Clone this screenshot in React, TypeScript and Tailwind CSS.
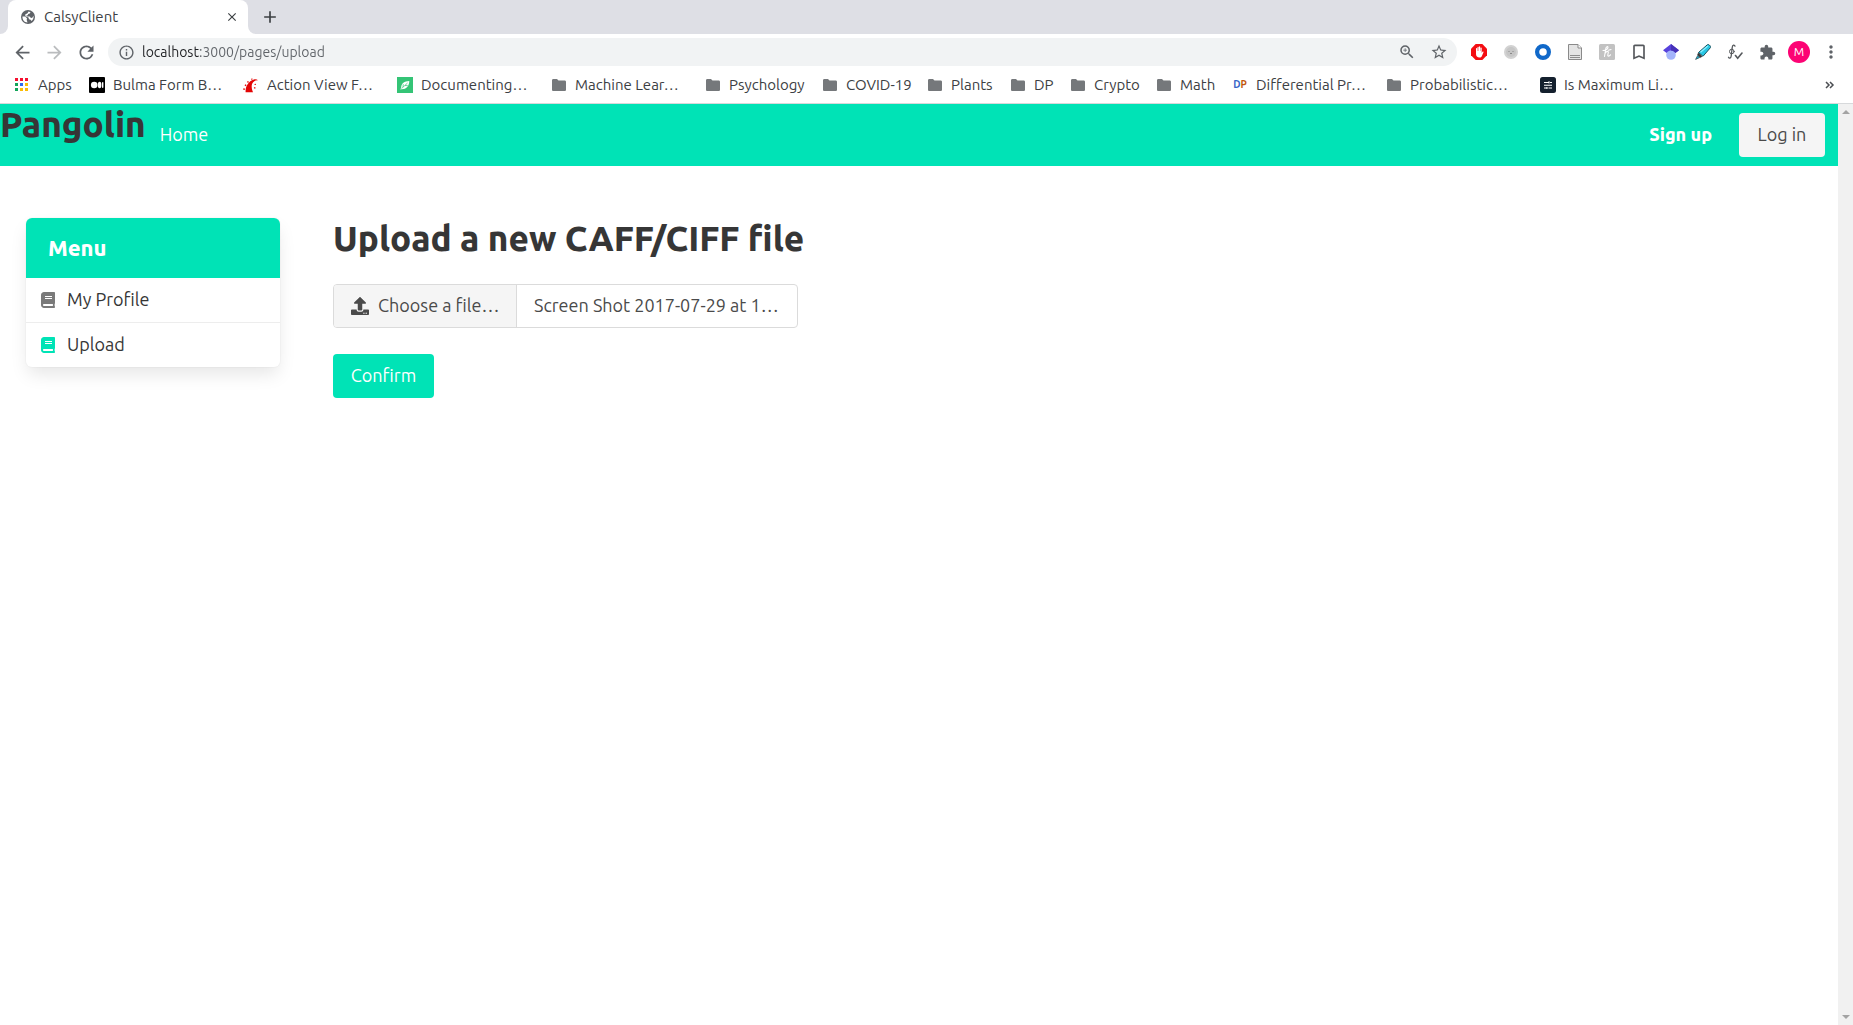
import type { ReactNode } from "react";
import { FaBook, FaUpload } from "react-icons/fa";
import {
  MdAdd,
  MdArrowBack,
  MdArrowForward,
  MdBookmarkBorder,
  MdClose,
  MdExtension,
  MdInfoOutline,
  MdMoreVert,
  MdRefresh,
  MdStarBorder,
  MdZoomIn,
} from "react-icons/md";

const GlobeIcon = () => (
  <svg width="14" height="14" viewBox="0 0 14 14">
    <circle cx="7" cy="7" r="7" fill="#5f6368" />
    <path d="M1.500 6.500L4 6.600l2 1.700-.3 1.700.8 2.400C3.500 12.500 1.200 9.800 1.500 6.500zM7.500 1.600l2 .6-.7 1.300-1.600.4-.4 1.300-1.400.4.6 1h2.600l1.400 1.300 1.300-.2 1.200-2c.4 2-.5 4-2 5.200L9.600 9.700 8 9.200 7.500 7.600 4.400 6.300 4.200 4.400 6.500 3.300z" fill="#fff" />
  </svg>
);

const AppsIcon = () => (
  <svg width="16" height="16" viewBox="0 0 16 16">
    <rect x="1" y="1" width="3" height="3" fill="#f5102f" />
    <rect x="6" y="1" width="3" height="3" fill="#f5102f" />
    <rect x="11" y="1" width="3" height="3" fill="#f5102f" />
    <rect x="1" y="6" width="3" height="3" fill="#12a55a" />
    <rect x="6" y="6" width="3" height="3" fill="#2d6bf0" />
    <rect x="11" y="6" width="3" height="3" fill="#fbbc05" />
    <rect x="1" y="11" width="3" height="3" fill="#12a55a" />
    <rect x="6" y="11" width="3" height="3" fill="#fbbc05" />
    <rect x="11" y="11" width="3" height="3" fill="#fbbc05" />
  </svg>
);

const MediumIcon = () => (
  <svg width="16" height="16" viewBox="0 0 16 16">
    <rect width="16" height="16" rx="1" fill="#000" />
    <circle cx="5.2" cy="8" r="3.3" fill="#fff" />
    <ellipse cx="10.6" cy="8" rx="1.8" ry="3.2" fill="#fff" />
    <rect x="13" y="5" width="1.400" height="6" rx="0.700" fill="#fff" />
  </svg>
);

const RailsIcon = () => (
  <svg width="16" height="16" viewBox="0 0 16 16" fill="#e30505">
    <path d="M2.600 15.200C2.300 9.600 5 4.200 11 2.400c1.700-.5 3 .1 4 .9-3.600-.2-6.200 2.200-6.300 5.400-.1 2.500.5 4.600 1.300 6.500z" />
    <path d="M.4 11.200l1.500.3-.2 1.500-1.500-.2zM2.200 7.300l1.300.7-.6 1.300-1.300-.7zM5 3.900l1 1-1.100 1-.9-1.100zM8.500 1.400l1.300.4-.6 1-1.300-.3zM11.500 7l1.400-.2.2 1-1.500.3zM10.900 10.200l1.500.1.100 1.200-1.500-.1z" />
  </svg>
);

const LeafIcon = () => (
  <svg width="16" height="16" viewBox="0 0 16 16">
    <rect width="16" height="16" fill="#34c476" />
    <path d="M12.300 4C7.500 4.300 4 6.400 4.200 10.800L3.200 12.500l1-.3c4.800.3 7.900-2.600 8.100-8.200z" fill="#fff" />
    <path d="M4.500 11.600l6-5.600M6 10l.3-2.800M8 8.500l2.800.1" stroke="#34c476" strokeWidth="0.700" />
  </svg>
);

const FolderIcon = () => (
  <svg width="14" height="12" viewBox="0 0 14 12">
    <path d="M1.300 0H5l1.500 1.500h6.200c.7 0 1.300.6 1.300 1.300v7.900c0 .7-.6 1.300-1.300 1.300H1.300C.6 12 0 11.400 0 10.700V1.300C0 .6.6 0 1.300 0z" fill="#75787b" />
  </svg>
);

const DpIcon = () => (
  <span className="text-[10px] leading-4 font-bold">
    <span className="text-[#3765c8]">D</span>
    <span className="text-[#c2560c]">P</span>
  </span>
);

const StackIcon = () => (
  <svg width="16" height="16" viewBox="0 0 16 16">
    <rect width="16" height="16" rx="2.500" fill="#14202e" />
    <path d="M4 5.500h4.500M10 5.500h2M4 8.200h8M4 11h3M8.500 11H12M9 4.300v2.200M7 9.900v2.200" stroke="#fff" strokeWidth="1.100" />
  </svg>
);

type Bookmark = { label: string; icon: ReactNode; width: string };

const bookmarks: Bookmark[] = [
  { label: "Apps", icon: <AppsIcon />, width: "w-[75px]" },
  { label: "Bulma Form B…", icon: <MediumIcon />, width: "w-[154px]" },
  { label: "Action View F…", icon: <RailsIcon />, width: "w-[154px]" },
  { label: "Documenting…", icon: <LeafIcon />, width: "w-[154px]" },
  { label: "Machine Lear…", icon: <FolderIcon />, width: "w-[154px]" },
  { label: "Psychology", icon: <FolderIcon />, width: "w-[117px]" },
  { label: "COVID-19", icon: <FolderIcon />, width: "w-[105px]" },
  { label: "Plants", icon: <FolderIcon />, width: "w-[83px]" },
  { label: "DP", icon: <FolderIcon />, width: "w-[60px]" },
  { label: "Crypto", icon: <FolderIcon />, width: "w-[86px]" },
  { label: "Math", icon: <FolderIcon />, width: "w-[76px]" },
  { label: "Differential Pr…", icon: <DpIcon />, width: "w-[154px]" },
  { label: "Probabilistic…", icon: <FolderIcon />, width: "w-[154px]" },
  { label: "Is Maximum Li…", icon: <StackIcon />, width: "w-[154px]" },
];

const AdblockIcon = () => (
  <svg width="16" height="16" viewBox="0 0 16 16">
    <path d="M4.700 0h6.600L16 4.700v6.600L11.300 16H4.700L0 11.300V4.700z" fill="#f40d12" />
    <path d="M5 8V4.500c0-.8 1.200-.8 1.200 0V7h.3V3.300c0-.8 1.200-.8 1.200 0V7H8V2.900c0-.8 1.200-.8 1.200 0V7h.3V4c0-.8 1.200-.8 1.200 0v5l.7-1.200c.4-.7 1.400-.3 1.100.5l-1.600 3.700C10.400 13 9.600 13.500 8.500 13.500 6.200 13.500 5 12 5 10z" fill="#fff" />
  </svg>
);

const FaceIcon = () => (
  <svg width="16" height="16" viewBox="0 0 16 16">
    <circle cx="8" cy="8" r="7" fill="#d2d2d2" />
    <circle cx="8" cy="8" r="5" fill="#c6c6c6" />
    <path d="M5.500 7.500h1M9.500 7.500h1M7 9.300q1 .7 2 0" stroke="#888" fill="none" />
  </svg>
);

const RingIcon = () => (
  <svg width="16" height="16" viewBox="0 0 16 16">
    <circle cx="8" cy="8" r="5.900" fill="none" stroke="#1068c9" strokeWidth="4.200" />
  </svg>
);

const PageIcon = () => (
  <svg width="16" height="16" viewBox="0 0 16 16">
    <path d="M1.500.5H11L14.500 4v11.500h-13z" fill="#e4e4e4" stroke="#8a8a8a" />
    <path d="M11 .5V4h3.500" fill="#fff" stroke="#8a8a8a" />
    <path d="M3 11.500h10M3 13.500h10" stroke="#8d8d8d" />
  </svg>
);

const HoneyIcon = () => (
  <svg width="16" height="16" viewBox="0 0 16 16">
    <rect width="16" height="16" rx="1.500" fill="#c2c2c2" />
    <path d="M4 6.500c3 0 5-1.500 5-3.200 0-1.300-1.700-.8-2.200 1.200L5.500 12.500M6 9.500c1.500-2.500 3.500-2.800 3.300-1L8.800 11c-.2 1.500 1.400 1.500 2.700-.2M9.500 6.300l2.500-.8" fill="none" stroke="#fff" strokeWidth="1.100" strokeLinecap="round" />
  </svg>
);

const ScholarIcon = () => (
  <svg width="16" height="16" viewBox="0 0 16 16">
    <circle cx="8" cy="11" r="4.800" fill="#a3b4fb" />
    <path d="M8 0l8 6.200-3.600 2.700C11.500 7.400 10 6.500 8 6.500S4.500 7.400 3.600 8.900L0 6.200z" fill="#5742dc" />
    <path d="M8 0l8 6.200-3.600 2.700C11.500 7.400 10 6.500 8 6.500z" fill="#4632b8" />
  </svg>
);

const HighlighterIcon = () => (
  <svg width="16" height="16" viewBox="0 0 16 16" strokeLinejoin="round">
    <path d="M3.500 8.500L12.300.8c.7-.5 1.300-.4 1.900.1l1 1c.5.600.6 1.200.1 1.900L8 12.300z" fill="#27c7e5" stroke="#174f5c" />
    <path d="M5.500 8.200l7.300-6.300" stroke="#8df0ff" strokeWidth="1.300" />
    <path d="M3.300 9l3.700 3.500-1.800 1-2.600-2.500z" fill="#333" stroke="#222" strokeWidth="0.500" />
    <path d="M2.700 11.500l2 2L.6 15.400z" fill="#1fb7d6" stroke="#2b4147" strokeWidth="0.700" />
  </svg>
);

const FormulaIcon = () => (
  <svg width="16" height="16" viewBox="0 0 16 16" fill="none" stroke="#55585c" strokeWidth="1.300" strokeLinecap="round">
    <path d="M8 2.200C7.500.5 5.600.7 5.300 3L4.200 12c-.3 2.300-2 2.700-2.700 1.300" />
    <circle cx="4.800" cy="7.500" r="2.300" strokeWidth="1" />
    <path d="M8.500 11.500l2.200 2.800 4.300-5.300" strokeWidth="1.600" />
  </svg>
);

const extensions: { name: string; icon: ReactNode }[] = [
  { name: "Ad blocker", icon: <AdblockIcon /> },
  { name: "Face", icon: <FaceIcon /> },
  { name: "Ring", icon: <RingIcon /> },
  { name: "Page", icon: <PageIcon /> },
  { name: "Coupons", icon: <HoneyIcon /> },
  { name: "Reading list", icon: <MdBookmarkBorder size={20} className="shrink-0 text-[#55585c]" /> },
  { name: "Scholar", icon: <ScholarIcon /> },
  { name: "Highlighter", icon: <HighlighterIcon /> },
  { name: "Formula", icon: <FormulaIcon /> },
  { name: "Extensions", icon: <MdExtension size={17} className="shrink-0 text-[#5f6368]" /> },
];

function TabStrip() {
  return (
    <div className="flex h-[34px] bg-[#dedfe5] text-[#3c4043]">
      <div className="flex w-2 bg-white">
        <span className="h-full w-2 rounded-br-lg bg-[#dedfe5]" />
      </div>
      <div className="flex w-60 items-center rounded-t-lg bg-white pr-2 pl-[13px]">
        <GlobeIcon />
        <span className="ml-[9px] flex-1 text-[15px]">CalsyClient</span>
        <button aria-label="Close tab" className="flex size-4 items-center justify-center">
          <MdClose size={14} />
        </button>
      </div>
      <div className="flex w-2 bg-white">
        <span className="h-full w-2 rounded-bl-lg bg-[#dedfe5]" />
      </div>
      <button aria-label="New tab" className="ml-1 flex w-5 items-center justify-center">
        <MdAdd size={20} />
      </button>
    </div>
  );
}

function Toolbar() {
  return (
    <div className="flex h-9 items-center bg-white px-3 text-[#5f6368]">
      <div className="flex w-24 gap-3">
        <button aria-label="Back" className="flex w-5 justify-center">
          <MdArrowBack size={21} className="shrink-0" />
        </button>
        <button aria-label="Forward" className="flex w-5 justify-center text-[#babcbe]">
          <MdArrowForward size={21} className="shrink-0" />
        </button>
        <button aria-label="Reload" className="flex w-5 justify-center">
          <MdRefresh size={21} className="shrink-0" />
        </button>
      </div>
      <div className="flex h-7 flex-1 items-center rounded-full bg-[#f1f3f4] px-2">
        <span className="flex w-5 justify-center">
          <MdInfoOutline size={17} />
        </span>
        <input
          aria-label="Address"
          defaultValue="localhost:3000/pages/upload"
          className="ml-1.5 h-7 min-w-0 flex-1 bg-linear-to-r from-[#202124] from-[58px] to-[#5f6368] to-[58px] bg-clip-text text-[14px] text-transparent caret-black outline-none"
        />
        <button aria-label="Zoom" className="flex w-5 justify-center">
          <MdZoomIn size={18} />
        </button>
        <button aria-label="Bookmark this page" className="ml-3 flex w-5 justify-center">
          <MdStarBorder size={18} />
        </button>
      </div>
      <div className="ml-[14px] flex items-center gap-4">
        {extensions.map((e) => (
          <button key={e.name} aria-label={e.name} className="flex size-4 items-center justify-center">
            {e.icon}
          </button>
        ))}
      </div>
      <button className="ml-[13px] size-[22px] rounded-full bg-[#fc0374] text-center text-[12px] leading-[22px] text-white">
        M
      </button>
      <button aria-label="Browser menu" className="ml-[11px] flex w-5 justify-center">
        <MdMoreVert size={20} />
      </button>
    </div>
  );
}

function BookmarkBar() {
  return (
    <nav
      aria-label="Bookmarks"
      className="flex h-[34px] items-center border-b border-[#d7d9db] bg-white pb-1 pl-[14px] text-[15px] leading-5 text-[#3c4043]"
    >
      {bookmarks.map((b) => (
        <a key={b.label} href="#" className={`flex shrink-0 items-center gap-2 whitespace-nowrap ${b.width}`}>
          <span className="flex size-4 shrink-0 items-center justify-center">{b.icon}</span>
          {b.label}
        </a>
      ))}
      <button aria-label="More bookmarks" className="mr-[18px] ml-auto flex">
        <svg width="10" height="8" viewBox="0 0 10 8" fill="none" stroke="#4b4e52" strokeWidth="1.500">
          <path d="M1 1l3 3-3 3M5 1l3 3-3 3" />
        </svg>
      </button>
    </nav>
  );
}

function Navbar() {
  return (
    <nav className="flex h-[62px] items-stretch bg-[#00e3b6]">
      <h1 className="text-[35px] leading-10 font-extrabold text-[#363636]">Pangolin</h1>
      <a href="#" className="ml-[14px] flex items-center pb-0.5 text-[18px] text-white">
        Home
      </a>
      <div className="mr-[13px] ml-auto flex items-center gap-[27px] text-[18px]">
        <a href="#" className="pb-0.5 font-extrabold text-white">
          Sign up
        </a>
        <button className="h-11 w-[86px] rounded bg-[#f5f5f5] pb-0.5 text-[#4a4a4a]">Log in</button>
      </div>
    </nav>
  );
}

function SideMenu() {
  return (
    <aside className="w-[254px] shrink-0 self-start overflow-hidden rounded-md bg-white text-[18px] text-[#363636] shadow-[0_9px_18px_-2px_rgba(10,10,10,0.1),0_0_0_1px_rgba(10,10,10,0.02)]">
      <h2 className="bg-[#00e3b6] px-[22px] text-[22px] leading-[60px] font-extrabold text-white">Menu</h2>
      <a href="#" className="flex h-[45px] items-center border-b border-[#ededed] pl-[15px]">
        <FaBook size={16} className="w-[14px] text-[#7a7a7a]" />
        <span className="ml-3 pb-0.5">My Profile</span>
      </a>
      <a href="#" className="flex h-11 items-center pl-[15px]">
        <FaBook size={16} className="w-[14px] text-[#00e3b6]" />
        <span className="ml-3 pb-0.5">Upload</span>
      </a>
    </aside>
  );
}

function UploadForm() {
  return (
    <form className="flex flex-1 flex-col items-start" onSubmit={(e) => e.preventDefault()}>
      <h1 className="text-[35px] leading-10 font-extrabold text-[#363636]">Upload a new CAFF/CIFF file</h1>
      <label
        htmlFor="file"
        className="mt-[26px] flex h-11 w-[465px] cursor-pointer overflow-hidden rounded border border-[#dbdbdb] text-[18px] text-[#4a4a4a]"
      >
        <input id="file" type="file" className="sr-only" />
        <span className="flex w-[183px] shrink-0 items-center border-r border-[#dbdbdb] bg-[#f5f5f5] pl-[17px] whitespace-nowrap">
          <FaUpload size={18} className="mr-[9px] shrink-0" />
          <span className="pb-0.5">Choose a file…</span>
        </span>
        <span className="flex items-center pb-0.5 pl-[17px] whitespace-nowrap">Screen Shot 2017-07-29 at 1…</span>
      </label>
      <button className="mt-[26px] h-11 w-[101px] rounded bg-[#00e3b6] pb-0.5 text-[18px] text-white">Confirm</button>
    </form>
  );
}

function Scrollbar() {
  return (
    <div aria-hidden="true" className="flex w-[15px] shrink-0 flex-col items-center justify-between bg-[#f1f1f1] py-[6px]">
      <svg width="8" height="4" viewBox="0 0 8 4" fill="#a3a3a3">
        <path d="M4 0l4 4H0z" />
      </svg>
      <svg width="8" height="4" viewBox="0 0 8 4" fill="#a3a3a3">
        <path d="M0 0h8L4 4z" />
      </svg>
    </div>
  );
}

export default function App() {
  return (
    <div className="flex h-screen flex-col overflow-hidden bg-white font-[Ubuntu,'Noto_Sans',sans-serif]">
      <header>
        <TabStrip />
        <Toolbar />
        <BookmarkBar />
      </header>
      <div className="flex min-h-0 flex-1">
        <div className="min-w-0 flex-1">
          <Navbar />
          <main className="flex gap-[53px] px-[26px] pt-[52px]">
            <SideMenu />
            <UploadForm />
          </main>
        </div>
        <Scrollbar />
      </div>
    </div>
  );
}
